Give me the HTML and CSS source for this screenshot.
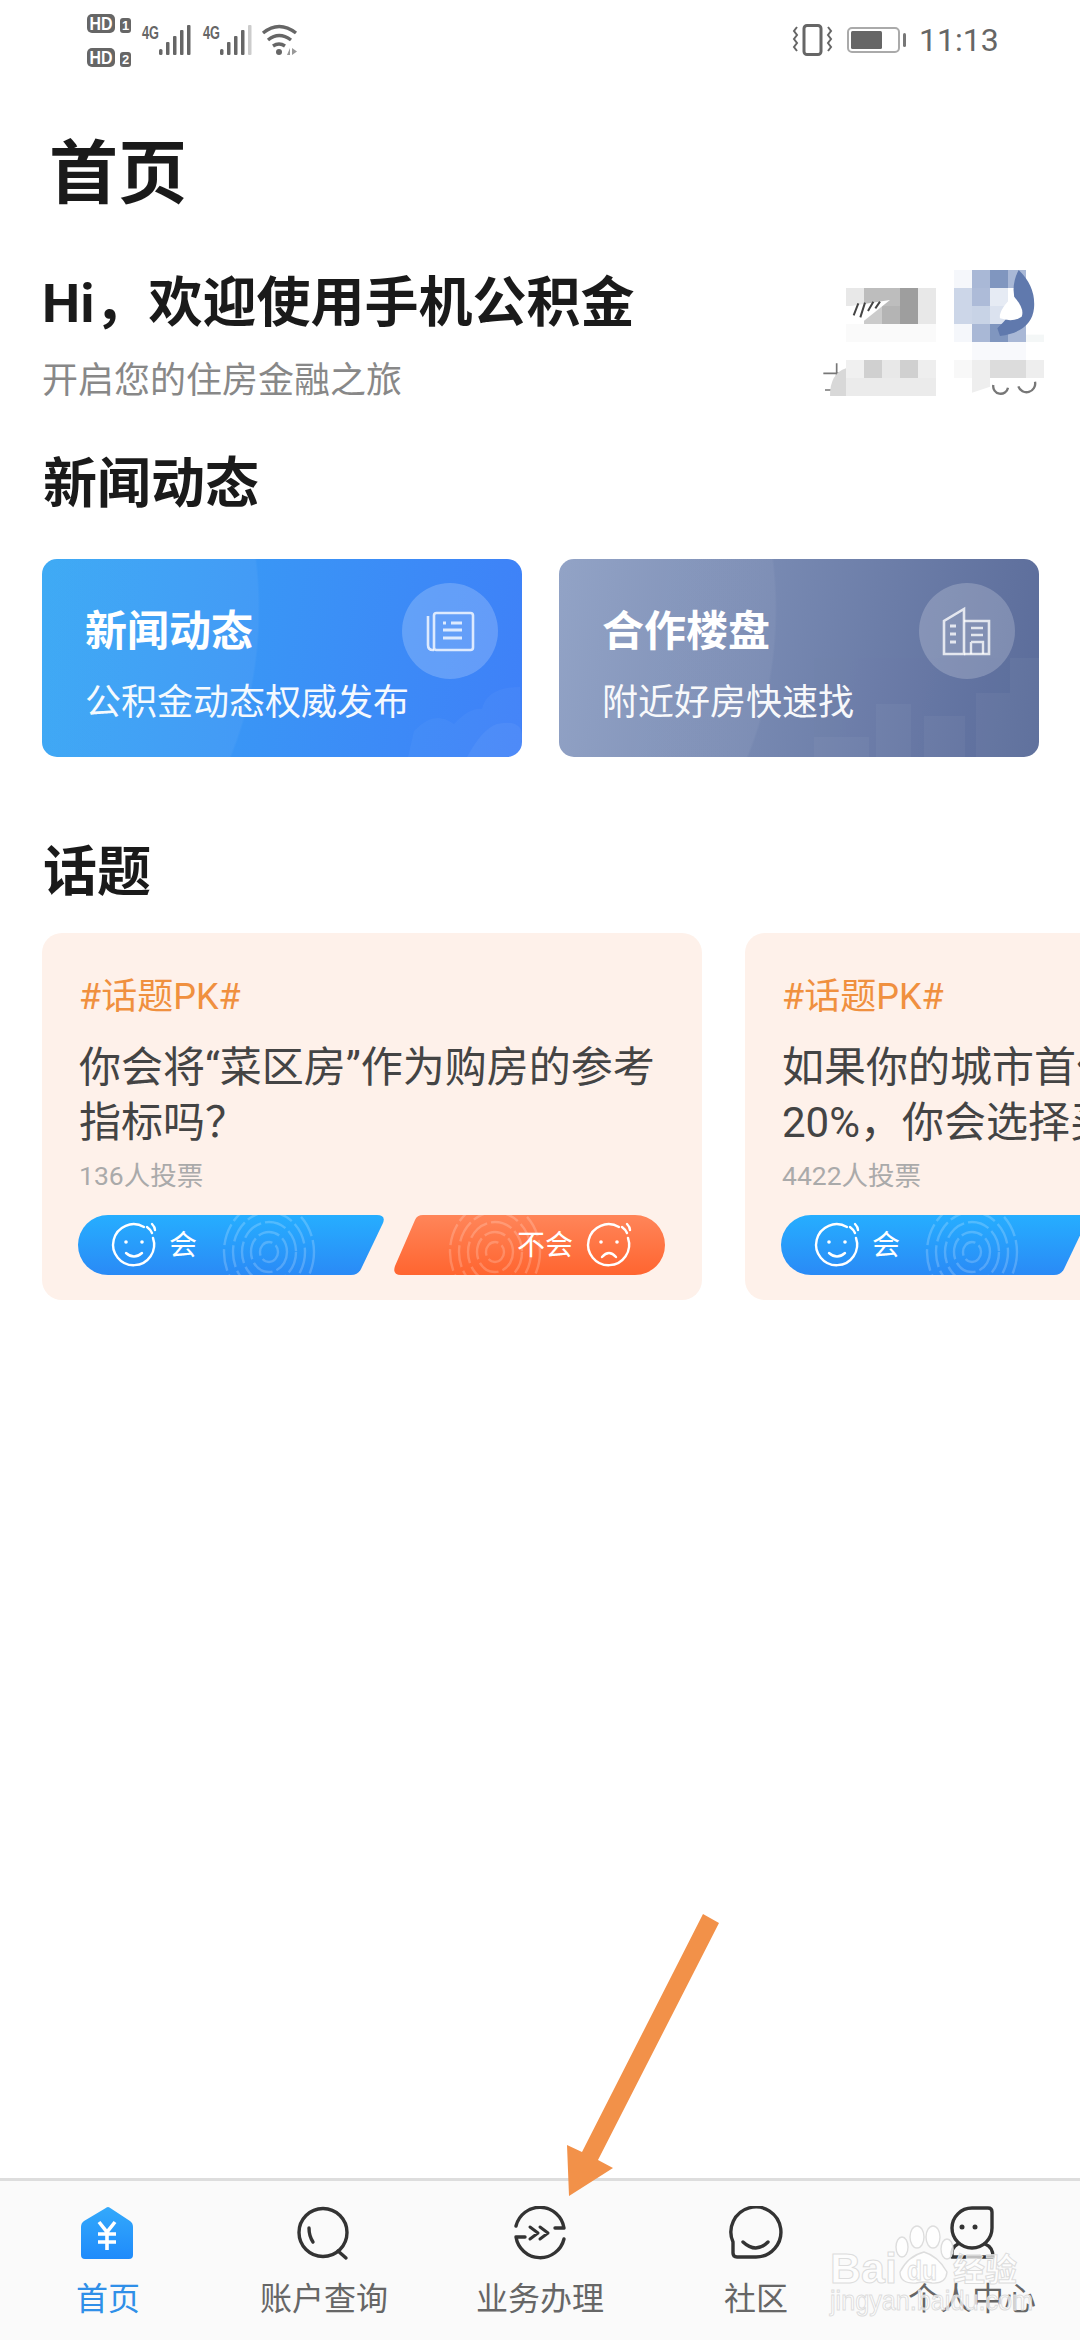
FILE: index.html
```html
<!DOCTYPE html>
<html lang="zh-CN">
<head>
  <meta charset="UTF-8">
  <meta name="viewport" content="width=device-width, initial-scale=1.0">
  <title>首页</title>
  <link rel="stylesheet" href="styles.css">
</head>
<body>
  <div class="page">
    <header class="status-bar">
      <svg class="status-left" viewBox="87 10 215 60">
        <rect x="87" y="14" width="28" height="19" rx="5" fill="#666"/>
        <text x="101" y="30" class="hd-text" text-anchor="middle" textLength="23" lengthAdjust="spacingAndGlyphs">HD</text>
        <rect x="120" y="18" width="11" height="15" rx="3" fill="#666"/>
        <text x="125.5" y="30" class="sim-text" text-anchor="middle">1</text>
        <rect x="87" y="48" width="28" height="19" rx="5" fill="#666"/>
        <text x="101" y="64" class="hd-text" text-anchor="middle" textLength="23" lengthAdjust="spacingAndGlyphs">HD</text>
        <rect x="120" y="52" width="11" height="15" rx="3" fill="#666"/>
        <text x="125.5" y="64" class="sim-text" text-anchor="middle">2</text>
        <text x="142" y="39" class="net-text" textLength="17" lengthAdjust="spacingAndGlyphs">4G</text>
        <g fill="#666">
          <rect x="159" y="49" width="3.5" height="6" rx="1.5"/>
          <rect x="166" y="42" width="3.5" height="13" rx="1"/>
          <rect x="173" y="36" width="3.5" height="19" rx="1"/>
          <rect x="180" y="30" width="3.5" height="25" rx="1"/>
          <rect x="187" y="25" width="3.5" height="30" rx="1"/>
        </g>
        <text x="203" y="39" class="net-text" textLength="17" lengthAdjust="spacingAndGlyphs">4G</text>
        <g fill="#666">
          <rect x="220" y="49" width="3.5" height="6" rx="1.5"/>
          <rect x="227" y="42" width="3.5" height="13" rx="1"/>
          <rect x="234" y="36" width="3.5" height="19" rx="1"/>
          <rect x="241" y="30" width="3.5" height="25" rx="1"/>
          <rect x="248" y="25" width="3.5" height="30" rx="1" fill="#ccc"/>
        </g>
        <g fill="none" stroke="#666" stroke-width="3.4">
          <path d="M263 33 Q279 20 296 33"/>
          <path d="M268 40 Q279 31 291 40"/>
          <path d="M273 46 Q279 42 285 46"/>
        </g>
        <circle cx="279" cy="52" r="3" fill="#666"/>
        <path d="M287 55 l3 -7 v7z M292 48 l5 3.5 l-5 3.5z" fill="#999"/>
      </svg>
      <div class="status-right">
        <svg class="icon-vibrate" viewBox="792 24 41 32">
          <rect x="804" y="25.5" width="17" height="29" rx="3" fill="none" stroke="#666" stroke-width="3"/>
          <path d="M797 27 l-3 4 l3 4 l-3 4 l3 4 l-3 4 l3 4 M828 27 l3 4 l-3 4 l3 4 l-3 4 l3 4 l-3 4" fill="none" stroke="#666" stroke-width="2"/>
        </svg>
        <svg class="icon-battery" viewBox="847 27 59 26">
          <rect x="848" y="28" width="51" height="24" rx="4" fill="none" stroke="#aaa" stroke-width="2"/>
          <rect x="851" y="31" width="31" height="18" rx="1.5" fill="#666"/>
          <rect x="903" y="33" width="3" height="14" rx="1.5" fill="#777"/>
        </svg>
        <span class="status-time">11:13</span>
      </div>
    </header>

    <main class="content">
      <h1 class="page-title">首页</h1>

      <section class="hero">
        <div class="hero-text">
          <h2 class="hero-title">Hi，欢迎使用手机公积金</h2>
          <p class="hero-sub">开启您的住房金融之旅</p>
        </div>
        <!-- weather widget, mosaicked in the source shot -->
        <svg class="mosaic" viewBox="0 0 900 480">
          <path d="M130 370 h95 M170 340 v40 M135 420 h60" fill="none" stroke="#777" stroke-width="5"/>
          <path d="M640 405 a22 22 0 0 0 44 8 M765 395 a26 26 0 0 1 -50 14" fill="none" stroke="#777" stroke-width="7"/>
          <g fill="#e8e8e8">
            <rect x="198" y="114" width="54" height="54"/>
            <rect x="414" y="114" width="54" height="108"/>
          </g>
          <rect x="252" y="114" width="108" height="54" fill="#bdbdbd"/>
          <rect x="360" y="114" width="54" height="108" fill="#9e9e9e"/>
          <rect x="252" y="168" width="54" height="54" fill="#cbcbcb"/>
          <rect x="306" y="168" width="54" height="54" fill="#b4b4b4"/>
          <path d="M198 170 L330 150 L240 222 H198Z" fill="#fff"/>
          <path d="M235 160 l-14 36 M255 158 l-14 44 M280 155 l-16 28 M300 155 l-14 20" fill="none" stroke="#444" stroke-width="6"/>
          <rect x="198" y="222" width="270" height="54" fill="#fafafa"/>
          <rect x="522" y="60" width="54" height="54" fill="#f5f7fb"/>
          <rect x="576" y="60" width="54" height="54" fill="#a9b8d6"/>
          <rect x="630" y="60" width="54" height="54" fill="#8096bf"/>
          <rect x="684" y="60" width="54" height="54" fill="#a9b8d6"/>
          <rect x="522" y="114" width="54" height="108" fill="#ccd6e8"/>
          <rect x="576" y="114" width="54" height="54" fill="#adbbd8"/>
          <rect x="630" y="114" width="54" height="54" fill="#e6ebf4"/>
          <rect x="576" y="168" width="54" height="54" fill="#c8d3e6"/>
          <rect x="630" y="168" width="54" height="54" fill="#dbe2ef"/>
          <rect x="522" y="222" width="54" height="54" fill="#f5f7fb"/>
          <rect x="576" y="222" width="54" height="54" fill="#a9b8d6"/>
          <rect x="630" y="222" width="54" height="54" fill="#8096bf"/>
          <rect x="684" y="222" width="54" height="54" fill="#a9b8d6"/>
          <rect x="738" y="254" width="54" height="22" fill="#f4f7f7"/>
          <rect x="576" y="276" width="162" height="54" fill="#f8f9fc"/>
          <path d="M716 60 Q768 110 762 175 Q755 245 660 258 L652 235 Q690 200 708 160 Q690 110 716 60Z" fill="#6079ad"/>
          <path d="M700 138 Q735 175 725 200 Q700 218 660 205 Q655 180 700 138Z" fill="#fff"/>
          <rect x="198" y="330" width="54" height="54" fill="#f0f0f0"/>
          <rect x="252" y="330" width="54" height="54" fill="#d0d0d0"/>
          <rect x="306" y="330" width="54" height="54" fill="#e8e8e8"/>
          <rect x="360" y="330" width="54" height="54" fill="#d0d0d0"/>
          <rect x="414" y="330" width="54" height="54" fill="#eee"/>
          <rect x="522" y="330" width="54" height="54" fill="#f8f8f8"/>
          <rect x="576" y="330" width="54" height="54" fill="#eee"/>
          <rect x="630" y="330" width="108" height="54" fill="#dcdcdc"/>
          <rect x="738" y="330" width="54" height="54" fill="#eee"/>
          <path d="M198 355 Q150 370 150 438 H198Z" fill="#d8d8d8"/>
          <rect x="198" y="384" width="270" height="54" fill="#ebebeb"/>
          <path d="M576 384 H630 V410 L576 428Z" fill="#eee"/>
        </svg>
      </section>

      <h2 class="section-title news-heading">新闻动态</h2>
      <div class="news-cards">
        <a class="news-card news-blue">
          <svg class="card-decor" viewBox="0 0 480 198">
            <path d="M372 172 Q392 150 412 165 Q428 148 440 150 Q445 128 478 128 L480 198 H366Z" fill="#fff" opacity="0.035"/>
            <path d="M425 198 Q440 170 455 165 Q478 160 480 175 V198Z" fill="#fff" opacity="0.05"/>
          </svg>
          <div class="news-text">
            <div class="news-title">新闻动态</div>
            <div class="news-sub">公积金动态权威发布</div>
          </div>
          <div class="news-icon">
            <svg viewBox="0 0 96 96" width="96" height="96" fill="none" stroke="#fff" stroke-opacity="0.78" stroke-width="2.6">
              <rect x="32" y="30" width="39" height="37" rx="2.5"/>
              <path d="M32 67 H31 Q26 67 26 62 V33"/>
              <path d="M41 40 h3 M49 40 h11 M41 47 h19 M41 55 h19" stroke-width="3"/>
            </svg>
          </div>
        </a>
        <a class="news-card news-gray">
          <svg class="card-decor" viewBox="0 0 480 198">
            <g fill="#fff" opacity="0.035">
              <rect x="451" y="99" width="29" height="35"/>
              <rect x="417" y="134" width="63" height="64"/>
              <rect x="365" y="157" width="41" height="41"/>
              <rect x="317" y="145" width="35" height="53"/>
              <rect x="255" y="178" width="55" height="20"/>
              <rect x="425" y="150" width="22" height="26"/>
            </g>
          </svg>
          <div class="news-text">
            <div class="news-title">合作楼盘</div>
            <div class="news-sub">附近好房快速找</div>
          </div>
          <div class="news-icon">
            <svg viewBox="0 0 96 96" width="96" height="96" fill="none" stroke="#fff" stroke-opacity="0.78" stroke-width="2.6">
              <path d="M25 71 V38 L45 26 V71 Z"/>
              <path d="M45 38 H70 V71 H45"/>
              <path d="M31 43 h6 M31 51 h6 M31 59 h6" stroke-width="3"/>
              <path d="M52 45 h12 M52 52 h12 M52 59 h12 V71 M52 59 V71" stroke-width="2.4"/>
            </svg>
          </div>
        </a>
      </div>

      <h2 class="section-title topic-heading">话题</h2>
      <div class="topic-scroll">
        <article class="topic-card">
          <div class="topic-tag">#话题PK#</div>
          <p class="topic-question">你会将“菜区房”作为购房的参考<br>指标吗？</p>
          <div class="topic-votes">136人投票</div>
          <div class="vote-row">
            <svg class="vote-yes" viewBox="0 0 306 60">
              <defs>
                <linearGradient id="gradYes" x1="0" y1="0" x2="0" y2="1">
                  <stop offset="0" stop-color="#26aeff"/>
                  <stop offset="1" stop-color="#2a8af6"/>
                </linearGradient>
                <clipPath id="clipYes"><rect width="306" height="60"/></clipPath>
              </defs>
              <path d="M30 0 H299 Q308 0 305 8 L283 54 Q280 60 273 60 H30 A30 30 0 0 1 30 0Z" fill="url(#gradYes)"/>
              <g clip-path="url(#clipYes)" fill="none" stroke="#fff" stroke-opacity="0.2" stroke-width="2.4" stroke-dasharray="22 4">
                <ellipse cx="191" cy="37" rx="9" ry="10"/>
                <ellipse cx="191" cy="37" rx="18" ry="20"/>
                <ellipse cx="191" cy="37" rx="27" ry="30"/>
                <ellipse cx="191" cy="37" rx="36" ry="40"/>
                <ellipse cx="191" cy="37" rx="45" ry="50"/>
              </g>
              <g fill="none" stroke="#fff" stroke-width="2.4" stroke-linecap="round">
                <path d="M66 12 A20.5 20.5 0 1 0 75 23"/>
                <path d="M69 12 q4 3 5 6 M74 9 q3 3 3 6"/>
                <path d="M48 38 q8 7 16 0"/>
              </g>
              <circle cx="48" cy="27" r="1.8" fill="#fff"/>
              <circle cx="64" cy="27" r="1.8" fill="#fff"/>
              <text x="91" y="40" class="vote-text">会</text>
            </svg>
            <svg class="vote-no" viewBox="0 0 271 60">
              <defs>
                <linearGradient id="gradNo" x1="0" y1="0" x2="0" y2="1">
                  <stop offset="0" stop-color="#ff8559"/>
                  <stop offset="1" stop-color="#ff6530"/>
                </linearGradient>
                <clipPath id="clipNo"><rect width="271" height="60"/></clipPath>
              </defs>
              <path d="M29 0 H241 A30 30 0 0 1 241 60 H7 Q-2 60 1 51 L21 5 Q23 0 29 0Z" fill="url(#gradNo)"/>
              <g clip-path="url(#clipNo)" fill="none" stroke="#fff" stroke-opacity="0.2" stroke-width="2.4" stroke-dasharray="22 4">
                <ellipse cx="101" cy="37" rx="9" ry="10"/>
                <ellipse cx="101" cy="37" rx="18" ry="20"/>
                <ellipse cx="101" cy="37" rx="27" ry="30"/>
                <ellipse cx="101" cy="37" rx="36" ry="40"/>
                <ellipse cx="101" cy="37" rx="45" ry="50"/>
              </g>
              <text x="123" y="40" class="vote-text">不会</text>
              <g fill="none" stroke="#fff" stroke-width="2.4" stroke-linecap="round">
                <path d="M225 12 A20.5 20.5 0 1 0 234 23"/>
                <path d="M228 12 q4 3 5 6 M233 9 q3 3 3 6"/>
                <path d="M208 42 q7 -8 14 0"/>
              </g>
              <circle cx="207" cy="27" r="1.8" fill="#fff"/>
              <circle cx="223" cy="27" r="1.8" fill="#fff"/>
            </svg>
          </div>
        </article>
        <article class="topic-card">
          <div class="topic-tag">#话题PK#</div>
          <p class="topic-question">如果你的城市首付比例提高到<br>20%，你会选择买房吗？</p>
          <div class="topic-votes">4422人投票</div>
          <div class="vote-row">
            <svg class="vote-yes" viewBox="0 0 306 60">
              <path d="M30 0 H299 Q308 0 305 8 L283 54 Q280 60 273 60 H30 A30 30 0 0 1 30 0Z" fill="url(#gradYes)"/>
              <g clip-path="url(#clipYes)" fill="none" stroke="#fff" stroke-opacity="0.2" stroke-width="2.4" stroke-dasharray="22 4">
                <ellipse cx="191" cy="37" rx="9" ry="10"/>
                <ellipse cx="191" cy="37" rx="18" ry="20"/>
                <ellipse cx="191" cy="37" rx="27" ry="30"/>
                <ellipse cx="191" cy="37" rx="36" ry="40"/>
                <ellipse cx="191" cy="37" rx="45" ry="50"/>
              </g>
              <g fill="none" stroke="#fff" stroke-width="2.4" stroke-linecap="round">
                <path d="M66 12 A20.5 20.5 0 1 0 75 23"/>
                <path d="M69 12 q4 3 5 6 M74 9 q3 3 3 6"/>
                <path d="M48 38 q8 7 16 0"/>
              </g>
              <circle cx="48" cy="27" r="1.8" fill="#fff"/>
              <circle cx="64" cy="27" r="1.8" fill="#fff"/>
              <text x="91" y="40" class="vote-text">会</text>
            </svg>
          </div>
        </article>
      </div>
    </main>

    <nav class="tab-bar">
      <a class="tab tab-active">
        <svg viewBox="0 0 60 56" width="60" height="56">
          <defs>
            <linearGradient id="gradHome" x1="0" y1="0" x2="0" y2="1">
              <stop offset="0" stop-color="#33a9fb"/>
              <stop offset="1" stop-color="#1f8bfb"/>
            </linearGradient>
          </defs>
          <path d="M30 1 Q31.500 1 33 2.500 L52 15 Q55 17 55 21 V49 Q55 53 51 53 H7 Q3 53 3 49 V21 Q3 17 6 15 L27 2.500 Q28.500 1 30 1Z" fill="url(#gradHome)"/>
          <path d="M21 16 L29 26 L37 16 M29 26 V44 M20 28 H38 M20 36 H38" fill="none" stroke="#fff" stroke-width="3.6"/>
        </svg>
        <span>首页</span>
      </a>
      <a class="tab">
        <svg viewBox="0 0 60 56" width="60" height="56" fill="none" stroke="#333" stroke-width="3.4" stroke-linecap="round">
          <circle cx="29" cy="26.500" r="24"/>
          <path d="M44 45 L52 52"/>
          <path d="M15 22 Q15 30 19 36"/>
        </svg>
        <span>账户查询</span>
      </a>
      <a class="tab">
        <svg viewBox="0 0 60 56" width="60" height="56" fill="none" stroke="#333" stroke-width="3.4" stroke-linecap="round" stroke-linejoin="round">
          <path d="M6 20 A24.500 24.500 0 0 1 54 22 H45"/>
          <path d="M54 33 A24.500 24.500 0 0 1 6 31 H15"/>
          <path d="M20 21 L28 27 L20 33 M30 21 L38 27 L30 33" stroke-width="3"/>
        </svg>
        <span>业务办理</span>
      </a>
      <a class="tab">
        <svg viewBox="0 0 60 56" width="60" height="56" fill="none" stroke="#333" stroke-width="3.400" stroke-linecap="round" stroke-linejoin="round">
          <path d="M7 36 V47 Q7 51 11 51 H30 A25 25 0 1 0 7 36Z"/>
          <path d="M17 36 Q30 48 42 36"/>
        </svg>
        <span>社区</span>
      </a>
      <a class="tab">
        <svg viewBox="0 0 60 56" width="60" height="56" fill="none" stroke="#333" stroke-width="3.4" stroke-linecap="round" stroke-linejoin="round">
          <path d="M30 2 H46 Q50 2 50 6 V22 A20 20 0 1 1 30 2Z"/>
          <path d="M16 38 Q9 41 10 51 H51 Q51 41 43 38"/>
          <circle cx="20" cy="21" r="2.500" fill="#333" stroke="none"/>
          <circle cx="33" cy="21" r="2.500" fill="#333" stroke="none"/>
        </svg>
        <span>个人中心</span>
      </a>
    </nav>

    <!-- annotation arrow on top of the screenshot -->
    <svg class="arrow" viewBox="560 1910 170 290">
      <path d="M703 1914 L719 1923 L598 2160 L613 2168 L569 2196 L567 2145 L582 2152 Z" fill="#f29149"/>
    </svg>

    <!-- site watermark -->
    <svg class="watermark" viewBox="825 2220 215 100">
      <g fill="#fff" fill-opacity="0.8" stroke="#ddd" stroke-width="1.4">
        <ellipse cx="902" cy="2247" rx="6" ry="10"/>
        <ellipse cx="917" cy="2237" rx="7" ry="11"/>
        <ellipse cx="933" cy="2237" rx="7" ry="11"/>
        <ellipse cx="947" cy="2249" rx="6" ry="10"/>
        <path d="M924 2252 Q938 2256 947 2272 Q946 2284 932 2283 Q924 2281 916 2283 Q900 2284 900 2272 Q908 2256 924 2252Z"/>
      </g>
      <g class="wm-text">
        <text x="830" y="2283" class="wm-bai" textLength="67" lengthAdjust="spacingAndGlyphs">Bai</text>
        <text x="907" y="2280" class="wm-du" textLength="30" lengthAdjust="spacingAndGlyphs">du</text>
        <text x="953" y="2281" class="wm-cn">经验</text>
        <text x="830" y="2310" class="wm-url" textLength="203" lengthAdjust="spacingAndGlyphs">jingyan.baidu.com</text>
      </g>
    </svg>
  </div>
</body>
</html>
```

FILE: styles.css
```css
* {
  box-sizing: border-box;
}
body {
  margin: 0;
  padding: 0;
  background: #fff;
  font-family: Roboto, "Noto Sans CJK SC", sans-serif;
}
h1, h2, p {
  margin: 0;
}
.page {
  position: relative;
  width: 1080px;
  height: 2340px;
  display: flex;
  flex-direction: column;
  overflow: hidden;
}

/* status bar */
.status-bar {
  height: 72px;
  padding: 10px 83px 0 87px;
  display: flex;
  justify-content: space-between;
  align-items: flex-start;
  flex-shrink: 0;
}
.status-left {
  width: 215px;
  height: 60px;
}
.hd-text {
  font: bold 18px "Liberation Sans", sans-serif;
  fill: #fff;
}
.sim-text {
  font: bold 13px "Liberation Sans", sans-serif;
  fill: #fff;
}
.net-text {
  font: bold 19px "Liberation Sans", sans-serif;
  fill: #666;
}
.status-right {
  display: flex;
  align-items: center;
  height: 60px;
}
.icon-vibrate {
  width: 41px;
  height: 32px;
  margin-right: 14px;
}
.icon-battery {
  width: 59px;
  height: 26px;
  margin-right: 13px;
}
.status-time {
  font-size: 32px;
  color: #666;
  width: 78px;
  line-height: 60px;
}

.content {
  flex: 1;
  min-height: 0;
}
.page-title {
  margin: 58px 0 0 49px;
  font-size: 69px;
  line-height: 90px;
  font-weight: 700;
  color: #1a1a1a;
}

/* greeting + weather */
.hero {
  margin-top: 30px;
  height: 160px;
  padding-left: 42px;
  display: flex;
  justify-content: space-between;
}
.hero-text {
  padding-top: 19px;
}
.hero-title {
  font-size: 54px;
  line-height: 70px;
  font-weight: 700;
  color: #1a1a1a;
}
.hero-sub {
  margin-top: 17px;
  font-size: 36px;
  line-height: 50px;
  color: #888;
}
.mosaic {
  width: 300px;
  height: 160px;
  flex-shrink: 0;
}

.section-title {
  margin-left: 43px;
  font-size: 54px;
  line-height: 70px;
  font-weight: 700;
  color: #1a1a1a;
}
.news-heading {
  margin-top: 40px;
}
.topic-heading {
  margin-top: 81px;
}

/* news cards */
.news-cards {
  margin-top: 39px;
  padding-left: 42px;
  display: flex;
  gap: 37px;
}
.news-card {
  position: relative;
  width: 480px;
  height: 198px;
  border-radius: 15px;
  overflow: hidden;
  padding: 24px 24px 0 43px;
  display: flex;
  justify-content: space-between;
  align-items: flex-start;
  color: #fff;
}
.news-blue {
  background:
    radial-gradient(ellipse 218px 300px at 0 50px, rgba(255, 255, 255, 0.05) 99%, transparent 100%),
    linear-gradient(100deg, #35a6f4, #3f80f8);
}
.news-gray {
  background:
    radial-gradient(ellipse 218px 300px at 0 50px, rgba(255, 255, 255, 0.05) 99%, transparent 100%),
    linear-gradient(100deg, #8c9ec3, #5b6c9a);
}
.card-decor {
  position: absolute;
  left: 0;
  top: 0;
  width: 480px;
  height: 198px;
}
.news-text {
  position: relative;
  width: 300px;
  padding-top: 21px;
  white-space: nowrap;
}
.news-title {
  font-size: 42px;
  line-height: 56px;
  font-weight: 700;
}
.news-sub {
  margin-top: 18px;
  font-size: 36px;
  line-height: 50px;
  opacity: 0.95;
}
.news-icon {
  position: relative;
  width: 96px;
  height: 96px;
  border-radius: 50%;
  background: rgba(255, 255, 255, 0.2);
  flex-shrink: 0;
}
.news-icon svg {
  display: block;
}

/* topic cards */
.topic-scroll {
  margin-top: 25px;
  padding-left: 42px;
  display: flex;
  gap: 43px;
  overflow: hidden;
}
.topic-card {
  width: 660px;
  height: 367px;
  flex-shrink: 0;
  border-radius: 20px;
  background: #fef1ea;
  padding: 39px 0 0 37px;
}
.topic-tag {
  font-size: 36px;
  line-height: 50px;
  color: #f0903f;
}
.topic-question {
  margin-top: 18px;
  font-size: 42px;
  line-height: 55px;
  color: #444;
  white-space: nowrap;
}
.topic-votes {
  margin-top: 6px;
  font-size: 26.5px;
  line-height: 40px;
  color: #aaa;
}
.vote-row {
  margin-top: 19px;
  margin-left: -1px;
  display: flex;
  gap: 10px;
}
.vote-yes {
  width: 306px;
  height: 60px;
  flex-shrink: 0;
  overflow: visible;
}
.vote-no {
  width: 271px;
  height: 60px;
  flex-shrink: 0;
  overflow: visible;
}
.vote-text {
  font-size: 28px;
  fill: #fff;
}

/* bottom tabs */
.tab-bar {
  height: 162px;
  flex-shrink: 0;
  border-top: 3px solid #ddd;
  background: #fafafa;
  display: flex;
}
.tab {
  width: 216px;
  padding-top: 25px;
  display: flex;
  flex-direction: column;
  align-items: center;
  color: #666;
  font-size: 32px;
  line-height: 44px;
}
.tab svg {
  display: block;
  margin-bottom: 15px;
}
.tab-active {
  color: #2f8fe8;
}

/* overlays */
.arrow {
  position: absolute;
  left: 560px;
  top: 1910px;
  width: 170px;
  height: 290px;
}
.watermark {
  position: absolute;
  left: 825px;
  top: 2220px;
  width: 215px;
  height: 100px;
}
.wm-text text {
  fill: #fff;
  fill-opacity: 0.7;
  stroke: #ddd;
  stroke-width: 1;
}
.wm-bai {
  font: 700 42px "Liberation Sans", sans-serif;
}
.wm-du {
  font: 700 28px "Liberation Sans", sans-serif;
}
.wm-cn {
  font: 700 32px "Noto Sans CJK SC", sans-serif;
}
.wm-url {
  font: 400 28px "Liberation Sans", sans-serif;
}
```
